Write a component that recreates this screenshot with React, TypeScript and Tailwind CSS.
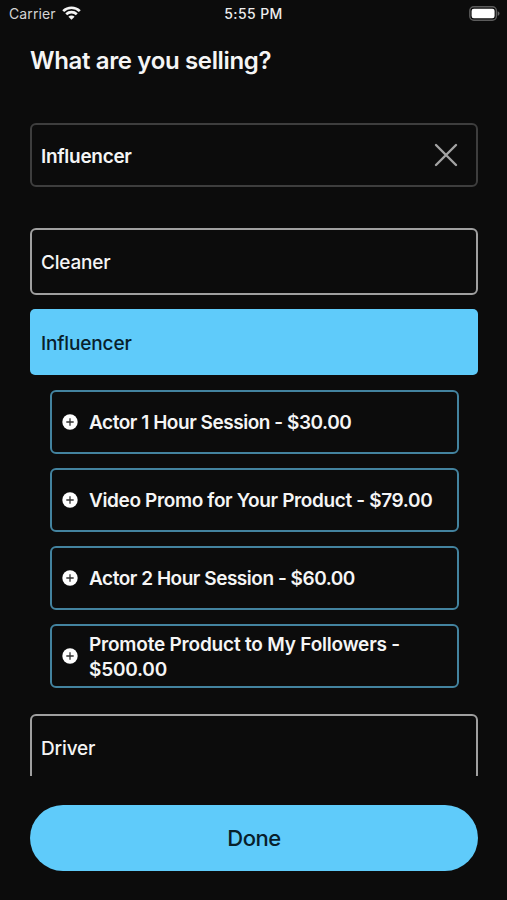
const products = [
  { name: "Actor 1 Hour Session - $30.00", spacing: "tracking-[-0.46px]" },
  { name: "Video Promo for Your Product - $79.00", spacing: "tracking-[-0.36px]" },
  { name: "Actor 2 Hour Session - $60.00", spacing: "tracking-[-0.47px]" },
  { name: "Promote Product to My Followers - $500.00", spacing: "tracking-[-0.2px]" },
];

function PlusBadge() {
  return (
    <svg className="mb-px size-4 shrink-0" viewBox="0 0 16 16">
      <circle cx="8" cy="8" r="7.7" fill="#fff" />
      <path d="M8 4.3v7.4M4.3 8h7.4" stroke="#333" strokeWidth="1.3" />
    </svg>
  );
}

function StatusBar() {
  return (
    <header className="grid h-7 grid-cols-3 items-center pl-[9px] pr-[7px] text-[14px] text-[#d4d4d4]">
      <div className="flex items-center gap-[6px]">
        <span className="mb-px tracking-[0.1px]">Carrier</span>
        <svg className="mb-[2px] h-[14px] w-[19px]" viewBox="0 0 19 14" fill="none" stroke="#f4f4f4" strokeWidth="2.7">
          <path d="M1.2 5.1a12 12 0 0 1 16.6 0M4.2 8.3a7.7 7.7 0 0 1 10.6 0" />
          <path d="M9.5 13.8 6.4 10.7a4.4 4.4 0 0 1 6.2 0Z" fill="#f4f4f4" stroke="none" />
        </svg>
      </div>
      <span className="mb-px mr-[2px] text-center font-medium tracking-[0.4px] text-[#eee]">5:55 PM</span>
      <svg className="mb-[2px] h-[15px] w-[31px] justify-self-end" viewBox="0 0 31 15">
        <rect x=".8" y=".8" width="26.6" height="13.4" rx="4" fill="none" stroke="#5c5c5c" strokeWidth="1.4" />
        <rect x="2.6" y="2.7" width="23" height="9.6" rx="2.2" fill="#fff" />
        <path d="M28.7 5.2c2.4.8 2.4 3.8 0 4.6Z" fill="#666" />
      </svg>
    </header>
  );
}

export default function App() {
  return (
    <main className="flex h-[900px] w-[507px] flex-col overflow-hidden bg-[#0c0c0c] font-['Inter','Liberation_Sans',sans-serif] text-[#f5f5f5]">
      <StatusBar />
      <h1 className="ml-[30px] mt-[17px] h-8 text-[24px] font-semibold leading-8 tracking-[-0.35px]">What are you selling?</h1>

      <div className="ml-[30px] mr-[29px] mt-[46px] flex h-16 shrink-0 items-center justify-between rounded-[6px] border-2 border-[#3e3e3e] pl-[9px] pr-[18px] text-[19px] font-semibold">
        <span className="mt-[5px] tracking-[-0.3px]">Influencer</span>
        <svg className="size-6" viewBox="0 0 24 24" stroke="#a3a3a3" strokeWidth="2.4" strokeLinecap="round">
          <path d="m2 2 20 20M22 2 2 22" />
        </svg>
      </div>

      <section className="ml-[30px] mr-[29px] mt-[41px] h-[548px] shrink-0 overflow-hidden text-[19px] font-medium">
        <div className="flex h-[67px] items-center rounded-[6px] border-2 border-[#a0a0a0] pl-[9px]">
          <span className="mt-1 tracking-[-0.2px]">Cleaner</span>
        </div>
        <div className="mt-[14px] flex h-[66px] items-center rounded-[5px] bg-[#5fcbfa] pl-[11px] text-[#08202a]">
          <span className="mt-1 tracking-[-0.15px]">Influencer</span>
        </div>
        <ul className="ml-5 mr-[19px] mt-[15px] flex flex-col gap-[14px]">
          {products.map((p) => (
            <li key={p.name} className="flex h-16 items-center gap-[11px] rounded-[6px] border-2 border-[#43839f] pl-[10px] font-semibold leading-[25px]">
              <PlusBadge />
              <span className={`mt-px w-[350px] ${p.spacing}`}>{p.name}</span>
            </li>
          ))}
        </ul>
        <div className="mt-[26px] flex h-[67px] items-center rounded-[6px] border-2 border-[#a0a0a0] pl-[9px]">
          <span className="mt-1 tracking-[-0.15px]">Driver</span>
        </div>
      </section>

      <button className="ml-[30px] mr-[29px] mt-[29px] h-[66px] shrink-0 rounded-full bg-[#5fcbfa] pt-px text-[22px] font-medium tracking-[-0.5px] text-[#08202a]">
        Done
      </button>
    </main>
  );
}
